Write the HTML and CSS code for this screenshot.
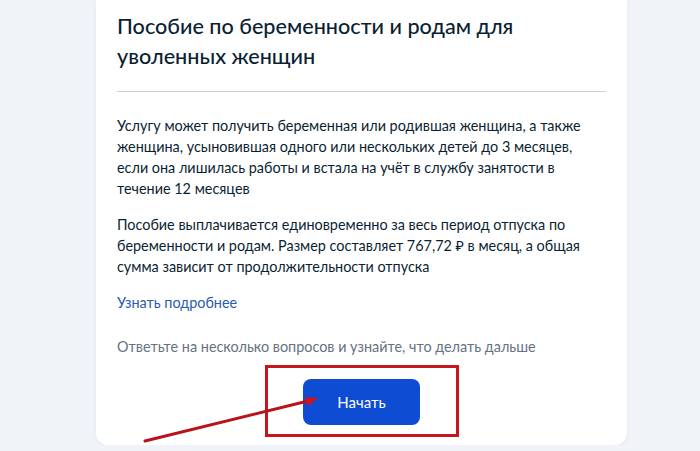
FILE: index.html
```html
<!DOCTYPE html>
<html lang="ru">
  <head>
    <meta charset="UTF-8" />
    <meta name="viewport" content="width=device-width, initial-scale=1.0" />
    <title>Пособие по беременности и родам</title>
    <link rel="stylesheet" href="styles.css">
  </head>
  <body>
    <div class="page">
      <div class="card">
        <h1 class="title">Пособие по беременности и родам для уволенных женщин</h1>
        <hr class="divider" />
        <p class="text">Услугу может получить беременная или родившая женщина, а также женщина, усыновившая одного или нескольких детей до 3 месяцев, если она лишилась работы и встала на учёт в службу занятости в течение 12 месяцев</p>
        <p class="text">Пособие выплачивается единовременно за весь период отпуска по беременности и родам. Размер составляет 767,72 ₽ в месяц, а общая сумма зависит от продолжительности отпуска</p>
        <a class="more" href="#">Узнать подробнее</a>
        <p class="hint">Ответьте на несколько вопросов и узнайте, что делать дальше</p>
        <div class="actions">
          <button class="start" type="button">Начать</button>
        </div>
      </div>
    </div>
    <!-- пометка поверх скриншота -->
    <svg class="mark" width="700" height="451" viewBox="0 0 700 451">
      <rect x="266.5" y="366.5" width="191" height="69" fill="none" stroke="#c8141c" stroke-width="3" />
      <line x1="145" y1="441" x2="308" y2="401" stroke="#b8131b" stroke-width="3" stroke-linecap="round" />
      <polygon points="318,398 305,397 308,406" fill="#d0141c" />
    </svg>
  </body>
</html>
```

FILE: styles.css
```css
body {
  margin: 0;
  padding: 0;
  background: #f0f3f8;
  font-family: Lato, "Noto Sans", sans-serif;
  color: #0b1f33;
}
.page {
  width: 531px;
  margin: 0 0 0 96px;
}
.card {
  background: #fff;
  border-radius: 0 0 12px 12px;
  box-shadow: 0 1px 4px rgba(16, 40, 80, 0.06);
  padding: 11px 21px 20px;
}
.title {
  margin: 0;
  font-size: 21.6px;
  line-height: 30px;
  font-weight: 500;
}
.divider {
  margin: 20px 0 0;
  border: none;
  border-top: 1px solid #c9d1da;
}
.text {
  margin: 23px 0 0;
  font-size: 14.4px;
  line-height: 21px;
}
.text + .text {
  margin-top: 15px;
}
.more {
  display: block;
  margin-top: 15px;
  font-size: 14.4px;
  line-height: 21px;
  color: #2a5bb0;
  text-decoration: none;
}
.hint {
  margin: 23px 0 0;
  font-size: 14.4px;
  line-height: 21px;
  color: #66727f;
}
.actions {
  display: flex;
  justify-content: center;
  margin-top: 22px;
}
.start {
  width: 117px;
  height: 46px;
  border: none;
  border-radius: 8px;
  background: #0d4cd3;
  color: #fff;
  font-family: Lato, "Noto Sans", sans-serif;
  font-size: 15px;
  cursor: pointer;
}
.mark {
  position: absolute;
  left: 0;
  top: 0;
  pointer-events: none;
}
```
